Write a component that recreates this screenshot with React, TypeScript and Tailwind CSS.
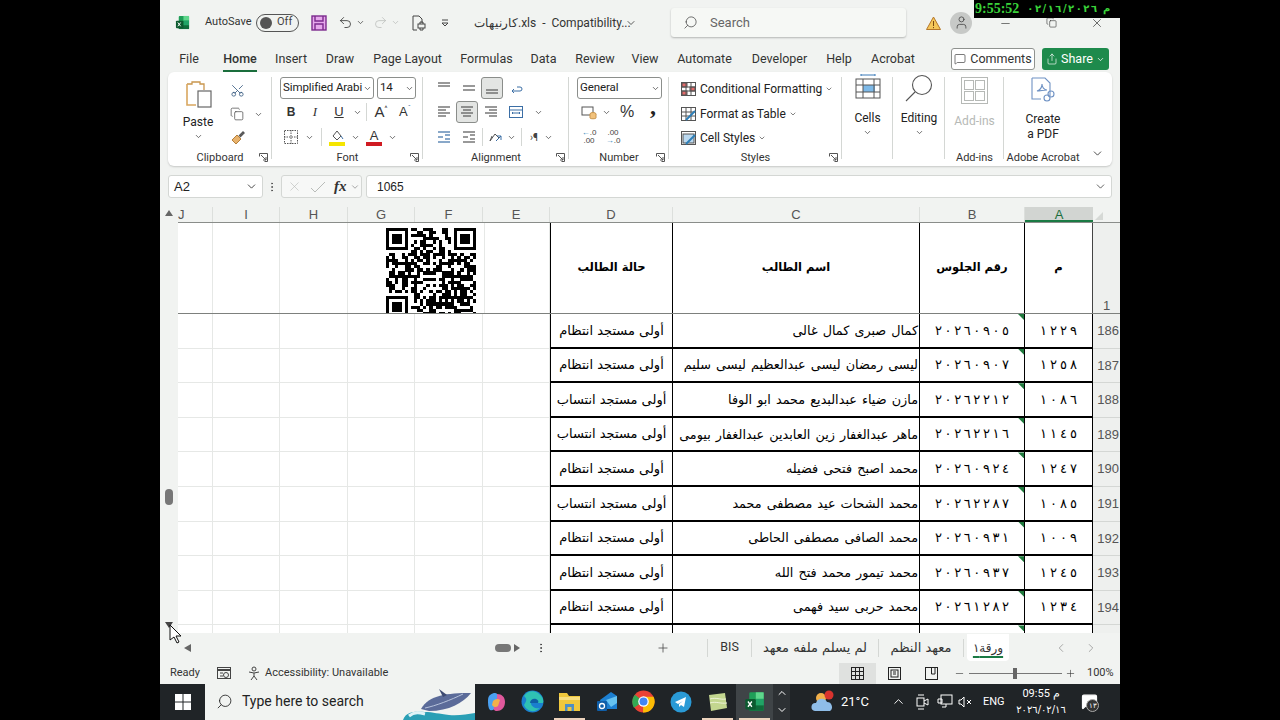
import { ChevronDown, ChevronLeft, ChevronRight, ChevronUp, MessageSquare, Minus, Plus, Scissors, Search, Share, Undo2, Redo2, User, X, Copy, MoreVertical } from "lucide-react";
import type { ReactNode } from "react";

const arabicFont = "font-['DejaVu_Sans','Noto_Sans',sans-serif]";

const rows = [
  ["186", "١٢٢٩", "٢٠٢٦٠٩٠٥", "كمال صبرى كمال غالى", "أولى مستجد انتظام"],
  ["187", "١٢٥٨", "٢٠٢٦٠٩٠٧", "ليسى رمضان ليسى عبدالعظيم ليسى سليم", "أولى مستجد انتظام"],
  ["188", "١٠٨٦", "٢٠٢٦٢٢١٢", "مازن ضياء عبدالبديع محمد ابو الوفا", "أولى مستجد انتساب"],
  ["189", "١١٤٥", "٢٠٢٦٢٢١٦", "ماهر عبدالغفار زين العابدين عبدالغفار بيومى", "أولى مستجد انتساب"],
  ["190", "١٢٤٧", "٢٠٢٦٠٩٢٤", "محمد اصبح فتحى فضيله", "أولى مستجد انتظام"],
  ["191", "١٠٨٥", "٢٠٢٦٢٢٨٧", "محمد الشحات عيد مصطفى محمد", "أولى مستجد انتساب"],
  ["192", "١٠٠٩", "٢٠٢٦٠٩٣١", "محمد الصافى مصطفى الحاطى", "أولى مستجد انتظام"],
  ["193", "١٢٤٥", "٢٠٢٦٠٩٣٧", "محمد تيمور محمد فتح الله", "أولى مستجد انتظام"],
  ["194", "١٢٣٤", "٢٠٢٦١٢٨٢", "محمد حربى سيد فهمى", "أولى مستجد انتظام"],
];

const colHeaders = [
  ["J", "w-[35px]"],
  ["I", "w-[67px]"],
  ["H", "w-[68px]"],
  ["G", "w-[67px]"],
  ["F", "w-[68px]"],
  ["E", "w-[67px]"],
  ["D", "w-[123px]"],
  ["C", "w-[247px]"],
  ["B", "w-[105px]"],
];

const emptyCols = ["w-[35px]", "w-[67px]", "w-[68px]", "w-[67px]", "w-[68px]", "w-[67px]"];

function Chev({ size = 10, className = "" }: { size?: number; className?: string }) {
  return <ChevronDown size={size} strokeWidth={2} className={"text-[#444] " + className} />;
}

// letter-spacing is ignored on arabic runs, so spread the digits by hand
function Spaced({ text, className = "" }: { text: string; className?: string }) {
  return (
    <span dir="ltr" className={"flex " + className}>
      {text.split("").map((c, i) => (
        <span key={i}>{c}</span>
      ))}
    </span>
  );
}

// little stacks of lines for the alignment buttons
function Lines({ rows, color = "#555" }: { rows: [number, number, number][]; color?: string }) {
  return (
    <svg width="16" height="16" viewBox="0 0 16 16" fill="none" stroke={color} strokeWidth="1.2">
      {rows.map(([a, b, y], i) => (
        <line key={i} x1={a} x2={b} y1={y} y2={y} />
      ))}
    </svg>
  );
}

function ExcelIcon({ size = 16 }: { size?: number }) {
  return (
    <svg width={size} height={size} viewBox="0 0 16 16">
      <rect x="4" y="1" width="11" height="14" rx="1" fill="#1f9e58" />
      <rect x="9" y="1" width="6" height="5" fill="#5fd68c" />
      <rect x="9" y="6" width="6" height="5" fill="#21a366" />
      <rect x="4" y="11" width="11" height="4" fill="#0f6b3a" />
      <rect x="1" y="6" width="8" height="8" rx="1" fill="#0c5a2f" />
      <path d="M3 8l3 4M6 8l-3 4" stroke="#fff" strokeWidth="1" />
    </svg>
  );
}

function QrCode() {
  const n = 29;
  const cells: ReactNode[] = [];
  const finder = (x: number, y: number) => x >= 0 && y >= 0 && x < 8 && y < 8;
  const inFinder = (x: number, y: number) => finder(x, y) || finder(n - 1 - x, y) || finder(x, n - 1 - y);
  for (let y = 0; y < n; y++) {
    for (let x = 0; x < n; x++) {
      if (inFinder(x, y)) continue;
      const v = (x * 7 + y * 13 + ((x * y) % 7) * 5 + ((x ^ y) % 5) * 3) % 9;
      if (v < 5) cells.push(<rect key={x + "-" + y} x={x} y={y} width="1.02" height="1.02" />);
    }
  }
  const eye = (x: number, y: number) => (
    <g key={x + "e" + y}>
      <rect x={x} y={y} width="7" height="1" />
      <rect x={x} y={y + 6} width="7" height="1" />
      <rect x={x} y={y} width="1" height="7" />
      <rect x={x + 6} y={y} width="1" height="7" />
      <rect x={x + 2} y={y + 2} width="3" height="3" />
    </g>
  );
  return (
    <svg width="90" height="90" viewBox="0 0 29 29" fill="#000" shapeRendering="crispEdges">
      {cells}
      {eye(0, 0)}
      {eye(22, 0)}
      {eye(0, 22)}
    </svg>
  );
}

function Group({ label, width, launcher, children, sep = true }: { label: string; width: string; launcher?: boolean; children: ReactNode; sep?: boolean }) {
  return (
    <div className={"relative flex flex-col shrink-0 " + width + (sep ? " after:absolute after:right-0 after:top-[5px] after:h-[82px] after:w-px after:bg-[#d4d7d4]" : "")}>
      <div className="h-[76px] pt-[5px]">{children}</div>
      <div className="relative mt-[2px] text-center text-[11px] leading-[16px] text-[#333]">
        {label}
        {launcher && (
          <svg className="absolute right-[4px] top-[3px]" width="9" height="9" viewBox="0 0 9 9" fill="none" stroke="#555">
            <path d="M.5 3.5v-3h8v8h-3M2 2l5 5M7 4v3H4" />
          </svg>
        )}
      </div>
    </div>
  );
}

function Combo({ text, width }: { text: string; width: string }) {
  return (
    <div className={"flex h-[22px] items-center justify-between rounded-[3px] border border-[#8c8f8c] bg-white pl-[2px] pr-[1px] text-[11.5px] tracking-[-0.1px] whitespace-nowrap text-[#222] " + width}>
      <span>{text}</span>
      <Chev size={9} className="shrink-0" />
    </div>
  );
}

function Selected({ children }: { children: ReactNode }) {
  return <div className="flex h-[22px] w-[22px] items-center justify-center rounded-[3px] border border-[#8a8d8a] bg-[#e3e5e3]">{children}</div>;
}

function Cell({ w, children }: { w: string; children?: ReactNode }) {
  return <div className={"flex h-[22px] shrink-0 items-center justify-center " + w}>{children}</div>;
}

function StyleRow({ label, icon }: { label: string; icon: ReactNode }) {
  return (
    <div className="flex h-[24.5px] items-center gap-[3px] pl-[12px] text-[12px] text-[#222]">
      {icon}
      <span className="ml-[1px]">{label}</span>
      <Chev size={8} />
    </div>
  );
}

function Ribbon() {
  return (
    <div className="mx-[8px] flex h-[94px] rounded-[6px] bg-white shadow-[0_1px_2px_rgba(0,0,0,0.18)]">
      <Group label="Clipboard" width="w-[104px]" launcher>
        <div className="flex">
          <div className="flex w-[60px] flex-col items-center text-[12px] text-[#222]">
            <svg width="30" height="30" viewBox="0 0 30 30" fill="none" className="ml-[2px] mt-[2px]">
              <path d="M3 5h5V3h8v2h4v6" stroke="#c9964e" strokeWidth="1.3" />
              <path d="M3 5v21h9" stroke="#d9a75f" strokeWidth="1.6" />
              <rect x="14" y="12" width="13" height="16" fill="#fff" stroke="#666" strokeWidth="1.2" />
            </svg>
            <span className="mt-[6px] leading-[14px]">Paste</span>
            <Chev size={9} className="mt-[3px]" />
          </div>
          <div className="-ml-[1px] flex flex-col items-start pl-[3px] pt-[1px]">
            <div className="flex h-[24px] items-center"><Scissors size={15} strokeWidth={1.3} className="-rotate-90 text-[#35597f]" /></div>
            <div className="flex h-[24px] items-center gap-[10px]"><Copy size={14} strokeWidth={1.2} className="text-[#444]" /><Chev size={9} /></div>
            <div className="flex h-[24px] items-center">
              <svg width="16" height="16" viewBox="0 0 16 16" fill="none"><path d="M2 10l5-5 4 4-5 5z" fill="#e8b26c" stroke="#b5803c" /><path d="M9 6l4-4 1 1-4 4" stroke="#555" strokeWidth="1.4" /></svg>
            </div>
          </div>
        </div>
      </Group>
      <Group label="Font" width="w-[151px]" launcher>
        <div className="flex gap-[3px] pl-[8px]">
          <Combo text="Simplified Arabi" width="w-[94px]" />
          <Combo text="14" width="w-[39px]" />
        </div>
        <div className="mt-[2px] flex items-center pl-[8px] text-[#333]">
          <Cell w="w-[22px]"><span className="font-['Liberation_Sans'] text-[12px] font-bold">B</span></Cell>
          <Cell w="w-[26px]"><span className="font-['Liberation_Serif'] text-[13px] italic">I</span></Cell>
          <Cell w="w-[22px]"><span className="font-['Liberation_Sans'] text-[13px] underline">U</span></Cell>
          <Cell w="w-[14px]"><Chev size={9} /></Cell>
          <div className="mx-[2px] h-[18px] w-px bg-[#d4d7d4]" />
          <Cell w="w-[24px]"><span className="font-['Liberation_Sans'] text-[15px]">A</span><span className="-mt-[6px] text-[7px]">^</span></Cell>
          <Cell w="w-[24px]"><span className="font-['Liberation_Sans'] text-[13px]">A</span><span className="-mt-[6px] text-[7px] text-[#3b6ea5]">ˇ</span></Cell>
        </div>
        <div className="mt-[3px] flex items-center pl-[9px]">
          <Cell w="w-[20px]">
            <svg width="16" height="16" viewBox="0 0 16 16" fill="none" stroke="#555" strokeDasharray="1.5 1"><rect x="1.5" y="1.5" width="13" height="13" /><path d="M8 1v14M1 8h14" /></svg>
          </Cell>
          <Cell w="w-[16px]"><Chev size={9} /></Cell>
          <div className="mx-[4px] h-[18px] w-px bg-[#d4d7d4]" />
          <Cell w="w-[22px]">
            <svg width="16" height="18" viewBox="0 0 16 18" fill="none"><path d="M4 8l4-5 4 5-4 4z" stroke="#555" /><path d="M12 8l2 3" stroke="#3b6ea5" /><rect y="14" width="16" height="4" fill="#f5e500" /></svg>
          </Cell>
          <Cell w="w-[14px]"><Chev size={9} /></Cell>
          <Cell w="w-[24px]">
            <div className="flex flex-col items-center">
              <span className="font-['Liberation_Sans'] text-[13px] leading-[13px] text-[#333]">A</span>
              <span className="h-[4px] w-[16px] bg-[#d01b22]" />
            </div>
          </Cell>
          <Cell w="w-[12px]"><Chev size={9} /></Cell>
        </div>
      </Group>
      <Group label="Alignment" width="w-[146px]" launcher>
        <div className="flex items-center pl-[9px]">
          <Cell w="w-[24px]"><Lines rows={[[2, 14, 3], [2, 14, 6]]} /></Cell>
          <Cell w="w-[25px]"><Lines rows={[[2, 14, 6], [2, 14, 10]]} /></Cell>
          <Selected><Lines rows={[[2, 14, 10], [2, 14, 13]]} /></Selected>
          <Cell w="w-[26px]">
            <svg width="16" height="16" viewBox="0 0 16 16" fill="none" stroke="#3b6ea5"><path d="M4 11h8a2 2 0 0 0 0-4H9M6 9l-2 2 2 2" /></svg>
          </Cell>
        </div>
        <div className="mt-[2px] flex items-center pl-[9px]">
          <Cell w="w-[24px]"><Lines rows={[[2, 14, 3], [2, 10, 6], [2, 14, 9], [2, 10, 12]]} /></Cell>
          <Selected><Lines rows={[[2, 14, 3], [4, 12, 6], [2, 14, 9], [4, 12, 12]]} /></Selected>
          <Cell w="w-[25px]"><Lines rows={[[2, 14, 3], [6, 14, 6], [2, 14, 9], [6, 14, 12]]} /></Cell>
          <Cell w="w-[25px]">
            <svg width="16" height="16" viewBox="0 0 16 16" fill="none" stroke="#3b6ea5"><rect x="1.5" y="2.5" width="13" height="11" /><path d="M1 6h14M4 9h8M5 8l-1 1 1 1M11 8l1 1-1 1" /></svg>
          </Cell>
          <Cell w="w-[20px]"><Chev size={9} /></Cell>
        </div>
        <div className="mt-[3px] flex items-center pl-[9px]">
          <Cell w="w-[24px]"><Lines rows={[[2, 14, 3], [9, 14, 6], [2, 7, 8], [9, 14, 10], [2, 14, 13]]} color="#3b6ea5" /></Cell>
          <Cell w="w-[25px]"><Lines rows={[[2, 14, 3], [9, 14, 6], [2, 7, 8], [9, 14, 10], [2, 14, 13]]} color="#555" /></Cell>
          <div className="mx-[1px] h-[18px] w-px bg-[#d4d7d4]" />
          <Cell w="w-[21px]">
            <svg width="16" height="16" viewBox="0 0 16 16" fill="none" stroke="#555"><path d="M3 12L8 5l4 4M3 12l2-5" /><path d="M9 12l5-5M14 7v4M14 7h-4" stroke="#3b6ea5" /></svg>
          </Cell>
          <Cell w="w-[12px]"><Chev size={9} /></Cell>
          <div className="mx-[4px] h-[18px] w-px bg-[#d4d7d4]" />
          <Cell w="w-[16px]"><span className="text-[10px] text-[#444]">›¶</span></Cell>
          <Cell w="w-[12px]"><Chev size={9} /></Cell>
        </div>
      </Group>
      <Group label="Number" width="w-[100px]" launcher>
        <div className="pl-[8px]"><Combo text="General" width="w-[85px]" /></div>
        <div className="mt-[2px] flex items-center pl-[9px]">
          <Cell w="w-[22px]">
            <svg width="16" height="15" viewBox="0 0 16 15" fill="none" stroke="#555"><rect x="1" y="2" width="11" height="8" /><ellipse cx="12" cy="9" rx="3" ry="1.5" fill="#f2c27c" stroke="#c9964e" /><path d="M9 9v4c0 1 6 1 6 0V9" fill="#f2c27c" stroke="#c9964e" /></svg>
          </Cell>
          <Cell w="w-[12px]"><Chev size={9} /></Cell>
          <Cell w="w-[30px]"><span className="font-['Liberation_Sans'] text-[16px] text-[#333]">%</span></Cell>
          <Cell w="w-[22px]"><span className="-mt-[12px] font-['Liberation_Serif'] text-[24px] font-bold leading-[14px] text-[#222]">,</span></Cell>
        </div>
        <div className="mt-[3px] flex items-center pl-[9px] font-['Liberation_Sans'] text-[8px] leading-[8px] text-[#444]">
          <Cell w="w-[22px]"><span className="text-center"><span className="text-[#2d7fb8]">←</span>.0<br />.00</span></Cell>
          <Cell w="w-[26px]"><span className="text-center">.00<br /><span className="text-[#2d7fb8]">→</span>.0</span></Cell>
        </div>
      </Group>
      <Group label="Styles" width="w-[173px]" launcher>
        <StyleRow
          label="Conditional Formatting"
          icon={<svg width="15" height="14" viewBox="0 0 15 14" fill="none" stroke="#555"><rect x=".5" y=".5" width="14" height="13" /><rect x="1" y="1" width="5" height="4" fill="#e36a6a" /><rect x="9" y="5" width="5" height="4" fill="#e36a6a" /><rect x="1" y="9" width="5" height="4" fill="#e36a6a" /><path d="M5 0v14M10 0v14M0 5h15M0 9h15" /></svg>}
        />
        <StyleRow
          label="Format as Table"
          icon={<svg width="15" height="14" viewBox="0 0 15 14" fill="none" stroke="#555"><rect x=".5" y=".5" width="14" height="13" /><path d="M5 0v14M10 0v14M0 5h15M0 9h15" /><path d="M5 13L14 4" stroke="#2d7fb8" strokeWidth="2" /></svg>}
        />
        <StyleRow
          label="Cell Styles"
          icon={<svg width="15" height="14" viewBox="0 0 15 14" fill="none" stroke="#555"><rect x=".5" y=".5" width="14" height="13" /><rect x="2" y="3" width="11" height="9" fill="#bcd9ef" /><path d="M5 13L14 4" stroke="#2d7fb8" strokeWidth="2" /></svg>}
        />
      </Group>
      <Group label="" width="w-[51px]">
        <div className="flex flex-col items-center text-[12px] text-[#222]">
          <svg width="26" height="26" viewBox="0 0 26 26" fill="none" stroke="#555" className="-mt-[3px]">
            <path d="M6 1h14M6 0v2M20 0v2" stroke="#3b7ab8" />
            <rect x="1" y="5" width="24" height="19" />
            <rect x="8" y="11" width="12" height="7" fill="#7db9e8" stroke="none" />
            <path d="M8 5v19M19 5v19M1 11h24M1 18h24" />
          </svg>
          <span className="mt-[10px] leading-[16px]">Cells</span>
          <Chev size={9} className="mt-[2px]" />
        </div>
      </Group>
      <Group label="" width="w-[52px]">
        <div className="flex flex-col items-center text-[12px] text-[#222]">
          <svg width="28" height="28" viewBox="0 0 28 28" fill="none" stroke="#555" className="-mt-[3px]" strokeWidth="1.1">
            <circle cx="17" cy="11" r="9.5" />
            <path d="M10 18L1 27" />
          </svg>
          <span className="mt-[8px] leading-[16px]">Editing</span>
          <Chev size={9} className="mt-[2px]" />
        </div>
      </Group>
      <Group label="Add-ins" width="w-[59px]">
        <div className="flex flex-col items-center text-[12px] text-[#b6b9b6]">
          <svg width="27" height="27" viewBox="0 0 27 27" fill="none" stroke="#b6b9b6"><rect x=".5" y=".5" width="26" height="26" /><rect x="3.5" y="3.5" width="9" height="9" /><rect x="14.5" y="3.5" width="9" height="9" /><rect x="3.5" y="14.5" width="9" height="9" /><rect x="14.5" y="14.5" width="9" height="9" /></svg>
          <span className="mt-[9px] leading-[16px]">Add-ins</span>
        </div>
      </Group>
      <Group label="Adobe Acrobat" width="w-[78px]" sep={false}>
        <div className="flex flex-col items-center text-[12px] leading-[15px] text-[#222]">
          <svg width="26" height="28" viewBox="0 0 26 28" fill="none" stroke="#6f92c4" strokeWidth="1.1">
            <path d="M2 1h13l5 5v13M2 1v21h9" />
            <path d="M7 14c3-1 5-4 5-7 0 3 2 6 5 6-3 0-7 1-10 1z" />
            <circle cx="17" cy="21" r="3" />
            <circle cx="21" cy="17" r="3" />
          </svg>
          <span className="mt-[7px]">Create</span>
          <span>a PDF</span>
        </div>
      </Group>
      <div className="flex flex-1 items-end justify-center pb-[6px]">
        <ChevronDown size={13} strokeWidth={1.6} className="text-[#333]" />
      </div>
    </div>
  );
}

function TitleBar() {
  return (
    <div className="flex h-[42px] items-center pt-[4px] pl-[15px] text-[12px] text-[#333]">
      <ExcelIcon size={15} />
      <span className="ml-[15px] w-[45px] whitespace-nowrap text-[11px]">AutoSave</span>
      <div className="ml-[6px] flex h-[18px] w-[43px] items-center rounded-full border border-[#555] pl-[3px]">
        <span className="h-[12px] w-[12px] rounded-full bg-[#555]" />
        <span className="ml-[5px] text-[11px] text-[#444]">Off</span>
      </div>
      <svg width="16" height="16" viewBox="0 0 16 16" className="ml-[12px]" fill="#e6a8ec" stroke="#7c2a8e" strokeWidth="1.4">
        <rect x="1" y="1" width="14" height="14" />
        <path d="M4 1v5h8V1M4 15v-6h8v6" fill="none" />
      </svg>
      <Undo2 size={15} strokeWidth={1.3} className="ml-[11px]" />
      <Chev size={9} className="ml-[3px]" />
      <Redo2 size={15} strokeWidth={1.2} className="ml-[8px] text-[#b9bcb9]" />
      <ChevronDown size={9} className="ml-[3px] text-[#b9bcb9]" />
      <svg width="15" height="16" viewBox="0 0 15 16" fill="none" stroke="#444" className="ml-[11px]">
        <path d="M2 1h6l3 3v4M2 1v14h4" />
        <rect x="7" y="9" width="7" height="4" />
        <path d="M9 9V7h3v2M9 13v2h3v-2" />
      </svg>
      <svg width="10" height="10" viewBox="0 0 10 10" fill="none" stroke="#444" className="ml-[14px]">
        <path d="M2 2h6M2 5l3 3 3-3z" />
      </svg>
      <span className="ml-[24px] w-[146px] whitespace-pre text-[12px] text-[#333]">كارنيهات.xls  -  Compatibility...</span>
      <ChevronDown size={12} strokeWidth={1.6} className="ml-[5px]" />
      <div className="ml-[34px] flex h-[29px] w-[235px] items-center rounded-[3px] bg-[#f6f8f5] pl-[12px] text-[13px] text-[#666] shadow-[0_1px_2px_rgba(0,0,0,0.25)]">
        <Search size={15} strokeWidth={1.2} className="-scale-x-100 text-[#444]" />
        <span className="ml-[12px]">Search</span>
      </div>
      <svg width="15" height="14" viewBox="0 0 15 14" className="ml-[20px]">
        <path d="M7.5 1L14.5 13.5H.5z" fill="#f4c65a" stroke="#b5762a" />
        <path d="M7.5 5v5M7.5 11v1.2" stroke="#7a4a12" />
      </svg>
      <div className="ml-[9px] flex h-[22px] w-[22px] items-center justify-center rounded-full bg-[#c7c9c7]">
        <User size={15} strokeWidth={1.3} className="text-[#444]" />
      </div>
      <Minus size={13} strokeWidth={1.2} className="ml-[27px] mt-[1px]" />
      <Copy size={11} strokeWidth={1.3} className="ml-[34px]" />
      <X size={14} strokeWidth={1.2} className="ml-[33px]" />
    </div>
  );
}

function MenuBar() {
  const items = [
    ["File", "w-[42px]"],
    ["Home", "w-[60px]"],
    ["Insert", "w-[42px]"],
    ["Draw", "w-[56px]"],
    ["Page Layout", "w-[79px]"],
    ["Formulas", "w-[79px]"],
    ["Data", "w-[35px]"],
    ["Review", "w-[68px]"],
    ["View", "w-[32px]"],
    ["Automate", "w-[87px]"],
    ["Developer", "w-[63px]"],
    ["Help", "w-[56px]"],
    ["Acrobat", "w-[52px]"],
  ];
  return (
    <div className="flex h-[31px] items-center pl-[8px] pt-[5px] text-[12.5px] text-[#333]">
      {items.map(([t, w]) => (
        <div key={t} className={"relative flex h-[24px] items-center justify-center whitespace-nowrap " + w + (t === "Home" ? " font-medium" : "")}>
          {t}
          {t === "Home" && <span className="absolute bottom-[-1px] left-[13px] right-[13px] h-[2px] bg-[#1a6e3c]" />}
        </div>
      ))}
      <div className="ml-[32px] flex h-[22px] w-[84px] items-center justify-center gap-[4px] rounded-[3px] border border-[#8f928f] bg-white text-[12.5px]">
        <MessageSquare size={12} strokeWidth={1.3} />
        Comments
      </div>
      <div className="ml-[7px] flex h-[22px] w-[67px] items-center justify-center gap-[3px] rounded-[3px] bg-[#1e8a4c] text-[12.5px] text-white">
        <Share size={12} strokeWidth={1.3} />
        Share
        <ChevronDown size={9} strokeWidth={2} />
      </div>
    </div>
  );
}

function FormulaBar() {
  return (
    <div className="mt-[9px] flex h-[23px] items-center pl-[8px] pr-[8px] text-[12px] text-[#222]">
      <div className="flex h-[23px] w-[95px] items-center justify-between rounded-[3px] border border-[#d4d7d4] bg-white pl-[5px] pr-[4px] font-['Liberation_Sans'] text-[13px]">
        A2
        <ChevronDown size={13} strokeWidth={1.5} />
      </div>
      <MoreVertical size={12} strokeWidth={2} className="mx-[3px] text-[#555]" />
      <div className="flex h-[23px] w-[81px] items-center rounded-[3px] border border-[#d4d7d4] bg-[#f7f8f7] pl-[5px]">
        <X size={15} strokeWidth={1} className="text-[#b9bcb9]" />
        <svg width="16" height="14" viewBox="0 0 16 14" fill="none" stroke="#b9bcb9" className="ml-[8px]"><path d="M1 8l4 4 10-10" /></svg>
        <span className="ml-[8px] font-['Liberation_Serif'] text-[15px] font-bold italic text-[#333]">fx</span>
        <ChevronDown size={10} strokeWidth={1.2} className="ml-[3px] text-[#555]" />
      </div>
      <div className="ml-[4px] flex h-[23px] flex-1 items-center justify-between rounded-[3px] border border-[#d4d7d4] bg-white pl-[10px] pr-[4px] font-['Liberation_Sans']">
        1065
        <ChevronDown size={13} strokeWidth={1.3} />
      </div>
    </div>
  );
}

function DataRow({ row }: { row: string[] }) {
  return (
    <div className="flex h-[34.6px] shrink-0">
      {emptyCols.map((w, i) => (
        <div key={i} className={"h-full border-r border-b border-[#e6e8e6] bg-white " + w} />
      ))}
      <div dir="rtl" className={"flex h-full w-[123px] items-center justify-center border-x border-b-2 border-black bg-white text-[13px] whitespace-nowrap text-black " + arabicFont}>{row[4]}</div>
      <div dir="rtl" className={"flex h-full w-[247px] items-center border-r border-b-2 border-black bg-white pr-[1px] text-[12.8px] [word-spacing:1px] whitespace-nowrap text-black " + arabicFont}>{row[3]}</div>
      <div className={"relative flex h-full w-[105px] items-center justify-center border-r border-b-2 border-black bg-white text-[13px] text-black " + arabicFont}>
        <Spaced text={row[2]} className="gap-[2.6px]" />
        <span className="absolute right-0 top-0 h-[6px] w-[6px] bg-[#1f7a3d] [clip-path:polygon(0_0,100%_0,100%_100%)]" />
      </div>
      <div className={"flex h-full w-[68px] items-center justify-center border-r border-b-2 border-black bg-white text-[13px] text-black " + arabicFont}>
        <Spaced text={row[1]} className="gap-[3px]" />
      </div>
      <div className="flex h-full w-[27px] items-center justify-end border-b border-[#d4d7d4] bg-[#eef0ee] pr-[1px] font-['Liberation_Sans'] text-[13px] text-[#555]">{row[0]}</div>
    </div>
  );
}

function Sheet() {
  return (
    <div className="mt-[9px] flex h-[426px] bg-[#f1f3f1]">
      <div className="flex w-[18px] shrink-0 flex-col items-center text-[#666]">
        <span className="mt-[3px] h-0 w-0 border-x-[4px] border-b-[6px] border-x-transparent border-b-[#666]" />
        <span className="mt-[273px] h-[16px] w-[8px] rounded-full bg-[#777]" />
        <span className="mt-[117px] h-0 w-0 border-x-[4px] border-t-[6px] border-x-transparent border-t-[#444]" />
      </div>
      <div className="flex min-w-0 flex-1 flex-col overflow-hidden">
        <div className="flex h-[16px] shrink-0 border-b border-[#8a8d8a] font-['Liberation_Sans'] text-[13px] leading-[15px] text-[#555]">
          {colHeaders.map(([t, w]) => (
            <div key={t} className={"border-r border-[#dcdfdc] text-center " + w + (t === "J" ? " text-left" : "")}>{t}</div>
          ))}
          <div className="w-[68px] border-b-2 border-[#1a7a44] bg-[#d2d5d2] text-center text-[#1a6e3c]">A</div>
          <div className="flex w-[27px] items-end justify-start pl-[2px]">
            <span className="mb-[2px] h-0 w-0 border-b-[8px] border-l-[8px] border-b-[#d6d9d6] border-l-transparent" />
          </div>
        </div>
        <div className="relative flex h-[91px] shrink-0 border-b border-[#7d807d]">
          {emptyCols.map((w, i) => (
            <div key={i} className={"h-full border-r border-[#e6e8e6] bg-white " + w} />
          ))}
          <div className="absolute left-[202px] top-0 flex h-full w-[105px] items-start justify-center overflow-hidden border-r border-[#e6e8e6] bg-white pt-[5px] pr-[2px]">
            <QrCode />
          </div>
          <div dir="rtl" className={"flex h-full w-[123px] items-center justify-center border-x border-black bg-white text-[11.5px] font-bold text-black " + arabicFont}>حالة الطالب</div>
          <div dir="rtl" className={"flex h-full w-[247px] items-center justify-center border-r border-black bg-white text-[11.5px] font-bold text-black " + arabicFont}>اسم الطالب</div>
          <div dir="rtl" className={"flex h-full w-[105px] items-center justify-center border-r border-black bg-white text-[11.5px] font-bold text-black " + arabicFont}>رقم الجلوس</div>
          <div dir="rtl" className={"flex h-full w-[68px] items-center justify-center border-r border-[#444] bg-white text-[11.5px] font-bold text-black " + arabicFont}>م</div>
          <div className="flex h-full w-[27px] items-end justify-center bg-[#eef0ee] font-['Liberation_Sans'] text-[13px] leading-[15px] text-[#555]">1</div>
        </div>
        {rows.map((r) => (
          <DataRow key={r[0]} row={r} />
        ))}
        <DataRow row={["", "", "", "", ""]} />
      </div>
    </div>
  );
}

function Tabs() {
  return (
    <div className="flex h-[30px] items-center text-[13px] text-[#333]">
      <span className="ml-[24px] h-0 w-0 border-y-[4px] border-r-[7px] border-y-transparent border-r-[#666]" />
      <span className="ml-[304px] h-[8px] w-[16px] rounded-full bg-[#777]" />
      <span className="ml-[3px] h-0 w-0 border-y-[4px] border-l-[6px] border-y-transparent border-l-[#666]" />
      <MoreVertical size={12} strokeWidth={2} className="ml-[15px] text-[#444]" />
      <Plus size={14} strokeWidth={1.3} className="ml-[109px] text-[#444]" />
      <span className="ml-[37px] h-[18px] w-px bg-[#d4d7d4]" />
      <span className="w-[43px] text-center text-[12.5px]">BIS</span>
      <span className="h-[18px] w-px bg-[#d4d7d4]" />
      <span dir="rtl" className={"w-[126px] text-center text-[13px] whitespace-nowrap " + arabicFont}>لم يسلم ملفه معهد</span>
      <span className="h-[18px] w-px bg-[#d4d7d4]" />
      <span dir="rtl" className={"w-[84px] text-center text-[13px] whitespace-nowrap " + arabicFont}>معهد النظم</span>
      <span className="h-[18px] w-px bg-[#d4d7d4]" />
      <div dir="rtl" className={"ml-[3px] flex h-[27px] w-[42px] items-center justify-center rounded-b-[4px] bg-white text-[12px] font-medium underline decoration-[#1a7a44] decoration-2 underline-offset-[4px] " + arabicFont}>ورقة١</div>
      <ChevronLeft size={14} strokeWidth={1.2} className="ml-[45px] text-[#888]" />
      <ChevronRight size={14} strokeWidth={1.2} className="ml-[16px] text-[#888]" />
    </div>
  );
}

function StatusBar() {
  return (
    <div className="flex h-[21px] items-center pl-[10px] text-[11px] text-[#333]">
      <span className="w-[47px]">Ready</span>
      <svg width="14" height="14" viewBox="0 0 14 14" fill="none" stroke="#444"><rect x=".5" y="1.5" width="13" height="11" /><path d="M.5 4h13" strokeWidth="2" /><circle cx="9" cy="9" r="2.5" /><path d="M3 7h3M3 10h3" /></svg>
      <svg width="14" height="15" viewBox="0 0 14 15" fill="none" stroke="#444" className="ml-[17px]"><circle cx="6" cy="3" r="2" /><path d="M1 6l5 1 5-1M6 7v3l-3 4M6 10l3 4" /></svg>
      <span className="ml-[3px] w-[119px] whitespace-nowrap">Accessibility: Unavailable</span>
      <div className="ml-[455px] flex h-[21px] w-[37px] items-center justify-center bg-[#dfe1df]">
        <svg width="13" height="13" viewBox="0 0 13 13" fill="none" stroke="#222"><rect x=".5" y=".5" width="12" height="12" /><path d="M4.5 0v13M8.5 0v13M0 4.5h13M0 8.5h13" /></svg>
      </div>
      <div className="flex h-[21px] w-[37px] items-center justify-center">
        <svg width="13" height="13" viewBox="0 0 13 13" fill="none" stroke="#222"><rect x=".5" y=".5" width="12" height="12" /><rect x="3" y="3" width="7" height="7" /><path d="M5 5h3M5 7h3" /></svg>
      </div>
      <div className="flex h-[21px] w-[37px] items-center justify-center">
        <svg width="13" height="13" viewBox="0 0 13 13" fill="none" stroke="#222"><rect x=".5" y=".5" width="12" height="12" /><path d="M6.5 0v7H10V0" /></svg>
      </div>
      <Minus size={11} strokeWidth={1.3} className="ml-[4px]" />
      <div className="relative ml-[4px] h-px w-[93px] bg-[#777]">
        <span className="absolute left-[44px] top-[-5px] h-[11px] w-[4px] bg-[#666]" />
      </div>
      <Plus size={11} strokeWidth={1.3} className="ml-[3px]" />
      <span className="ml-[11px]">100%</span>
    </div>
  );
}

function TaskIcon({ children, active, bar }: { children: ReactNode; active?: boolean; bar?: boolean }) {
  return (
    <div className={"relative flex h-full w-[37px] items-center justify-center " + (active ? "bg-[#3f4447]" : "")}>
      {children}
      {bar && <span className="absolute bottom-0 left-[3px] right-[3px] h-[2px] bg-[#ecd3bd]" />}
    </div>
  );
}

function Taskbar() {
  return (
    <div className="flex h-[37px] items-center bg-[#202427] text-white">
      <div className="flex h-full w-[45px] items-center justify-center">
        <svg width="16" height="16" viewBox="0 0 16 16" fill="#fff"><rect width="7.5" height="7.5" /><rect x="8.5" width="7.5" height="7.5" /><rect y="8.5" width="7.5" height="7.5" /><rect x="8.5" y="8.5" width="7.5" height="7.5" /></svg>
      </div>
      <div className="relative flex h-full w-[270px] items-center overflow-hidden bg-[#f1f3f1] pl-[11px] text-[14px] text-[#222]">
        <Search size={17} strokeWidth={1.2} className="-scale-x-100" />
        <span className="ml-[9px]">Type here to search</span>
        <svg className="absolute bottom-0 right-0" width="72" height="37" viewBox="0 0 72 37">
          <path d="M0 37c4-10 14-8 22-8s14 2 24 3 18-1 26-2v7z" fill="#2a9fb5" />
          <path d="M6 33c6-5 12-3 16-2" stroke="#dff3f7" strokeWidth="3" fill="none" />
          <path d="M18 26c8-14 26-16 50-16-8 10-22 18-42 18z" fill="#5b6b99" />
          <path d="M22 25c10-2 26-8 38-14" stroke="#b7c3dc" fill="none" />
          <path d="M36 6l4 8 4-2z" fill="#3d4a72" />
        </svg>
      </div>
      <div className="ml-[2px] flex h-full">
        <TaskIcon>
          <svg width="22" height="22" viewBox="0 0 22 22"><path d="M3 9c0-5 4-7 7-7 2 0 3 2 3 4l-2 9c-1 4-4 5-6 4-2-2-2-6-2-10z" fill="#4aa0f0" /><path d="M12 3c5 0 8 3 8 8 0 6-4 9-8 9-3 0-4-2-3-4l3-9z" fill="#e0589c" /><path d="M8 10c2-2 5-3 7-1l-2 6c-2 2-5 1-6-1z" fill="#f2b04a" /></svg>
        </TaskIcon>
        <TaskIcon>
          <svg width="23" height="23" viewBox="0 0 23 23"><circle cx="11.5" cy="11.5" r="11" fill="#1a7fcf" /><path d="M3 6C6 1 12 0 17 3c4 3 6 6 5 10H10c0 4 5 6 9 5-5 5-13 4-16-3 3-5 3-6 0-9z" fill="#2fc1b3" /><path d="M9 13c0-3 3-5 6-4 2 1 3 2 2 4z" fill="#0f5fa6" /></svg>
        </TaskIcon>
        <TaskIcon bar>
          <svg width="21" height="19" viewBox="0 0 21 19"><path d="M0 1h8l2 3h11v15H0z" fill="#f0c83c" /><path d="M0 5h21v3H0z" fill="#f8de7e" /><rect x="6" y="12" width="9" height="7" fill="#4e8fc4" /><rect x="8.500" y="15" width="4" height="4" fill="#f0c83c" /></svg>
        </TaskIcon>
        <TaskIcon>
          <svg width="22" height="22" viewBox="0 0 22 22"><path d="M4 9l11-8 6 4v13H6z" fill="#1c7fd1" /><path d="M10 9l11-4v7l-6 4z" fill="#65c2f0" /><rect x="1" y="10" width="10" height="10" rx="1" fill="#0f5ea8" /><circle cx="6" cy="15" r="2.500" fill="none" stroke="#fff" strokeWidth="1.300" /></svg>
        </TaskIcon>
        <TaskIcon>
          <svg width="23" height="23" viewBox="0 0 24 24"><circle cx="12" cy="12" r="11.500" fill="#e94235" /><path d="M12 12L2 18.500A11.500 11.500 0 0 1 3 5z" fill="#34a853" /><path d="M12 7h10.500a11.500 11.500 0 0 1-11 16.500z" fill="#fbbc04" /><circle cx="12" cy="12" r="5.500" fill="#fff" /><circle cx="12" cy="12" r="4.200" fill="#4285f4" /></svg>
        </TaskIcon>
        <TaskIcon>
          <svg width="22" height="22" viewBox="0 0 22 22"><circle cx="11" cy="11" r="10.500" fill="#2a9ad6" /><path d="M5 11l11-5-2 10-3-2-2 2v-3l4-3-5 3z" fill="#fff" /></svg>
        </TaskIcon>
        <TaskIcon bar>
          <svg width="20" height="20" viewBox="0 0 20 20"><path d="M1 3l16-2 2 15-16 3z" fill="#c3d68f" /><path d="M2 7c6-2 10 1 16 0M2 11c6-2 10 1 17 0" stroke="#eef3d8" fill="none" /></svg>
        </TaskIcon>
        <TaskIcon active bar>
          <ExcelIcon size={21} />
        </TaskIcon>
      </div>
      <div className="flex h-full w-[17px] flex-col items-center justify-center gap-[5px] bg-[#2d3134]">
        <ChevronUp size={12} strokeWidth={2} />
        <ChevronDown size={12} strokeWidth={2} />
      </div>
      <svg width="24" height="24" viewBox="0 0 24 24" className="ml-[21px]">
        <circle cx="10" cy="8" r="5" fill="#f2b04a" />
        <path d="M4 21a4 4 0 0 1 1-8 6 6 0 0 1 11-1 5 5 0 0 1 3 9z" fill="#8fbde8" />
        <circle cx="18" cy="5" r="4.500" fill="#d9332e" />
      </svg>
      <span className="ml-[6px] w-[30px] text-[13px]">21°C</span>
      <ChevronUp size={15} strokeWidth={1.5} className="ml-[20px]" />
      <svg width="14" height="18" viewBox="0 0 14 18" fill="none" stroke="#fff" className="ml-[9px]"><rect x="2" y="5" width="7" height="8" /><path d="M9 8l4-2v6l-4-2M3 2h6M3 16h6" /></svg>
      <svg width="16" height="15" viewBox="0 0 16 15" fill="none" stroke="#fff" className="ml-[8px]"><rect x="4" y="1" width="11" height="9" /><path d="M9 10v3h-4M1 5h4v4H1z" /></svg>
      <svg width="15" height="14" viewBox="0 0 15 14" fill="none" stroke="#fff" className="ml-[5px]"><path d="M1 5h2l3-3v10L3 9H1zM9 5l4 4M13 5l-4 4" /></svg>
      <span className="ml-[10px] w-[24px] text-[11px]">ENG</span>
      <div className="ml-[9px] flex w-[50px] flex-col items-center text-[11px] leading-[16px]">
        <span>09:55 م</span>
        <span dir="rtl" className={"text-[10px] " + arabicFont}>٢٠٢٦/٠٢/١٦</span>
      </div>
      <div className="relative ml-[15px]">
        <MessageSquare size={17} strokeWidth={1.5} fill="#fff" />
        <span className="absolute left-[5px] top-[6px] flex h-[13px] w-[13px] items-center justify-center rounded-full border border-[#aaa] bg-[#333] text-[7px]">١٣</span>
      </div>
    </div>
  );
}

export default function App() {
  return (
    <div className="relative flex h-[720px] w-[1280px] justify-center overflow-hidden bg-black font-['Roboto','Noto_Sans',sans-serif]">
      <div className="flex h-full w-[960px] flex-col bg-[#f1f3f1]">
        <TitleBar />
        <MenuBar />
        <Ribbon />
        <FormulaBar />
        <Sheet />
        <Tabs />
        <StatusBar />
        <Taskbar />
      </div>
      {/* clock overlay from the screen recorder */}
      <div dir="ltr" className="absolute left-[974px] top-0 flex h-[18px] w-[146px] items-center bg-black pl-[1px] text-[#3ad23a]">
        <span className="font-['Liberation_Serif'] text-[14px] font-bold leading-none">9:55:52</span>
        <Spaced text="٠٢/١٦/٢٠٢٦" className="ml-[8px] gap-[1.5px] font-['DejaVu_Sans'] text-[10px] font-bold leading-none" />
        <span className="ml-[6px] font-['DejaVu_Sans'] text-[10px] font-bold leading-none">م</span>
      </div>
      {/* mouse pointer */}
      <svg className="absolute left-[169px] top-[624px]" width="14" height="20" viewBox="0 0 14 20">
        <path d="M1 1v15l4-3 3 6 2-1-3-6h5z" fill="#fff" stroke="#111" />
      </svg>
    </div>
  );
}
